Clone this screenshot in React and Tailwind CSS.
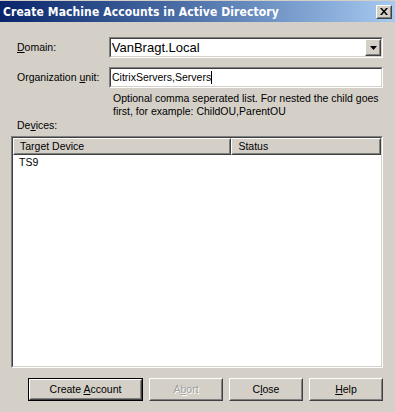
import React from "react";

const font = "font-['Liberation_Sans',Arial,sans-serif]";

// 3D sunken frame used for edit boxes and the list view
function Sunken({ className = "", children }) {
  return (
    <div className={`border border-t-[#808080] border-l-[#808080] border-b-white border-r-white ${className}`}>
      <div className="h-full w-full border border-t-[#404040] border-l-[#404040] border-b-[#d4d0c8] border-r-[#d4d0c8] bg-white">
        {children}
      </div>
    </div>
  );
}

function Raised({ className = "", innerClass = "", children }) {
  return (
    <div className={`border border-t-white border-l-white border-b-[#404040] border-r-[#404040] bg-[#d4d0c8] ${className}`}>
      <div className={`h-full w-full border border-t-[#d4d0c8] border-l-[#d4d0c8] border-b-[#808080] border-r-[#808080] ${innerClass}`}>
        {children}
      </div>
    </div>
  );
}

function Button({ children, isDefault, disabled, width }) {
  const face = (
    <Raised className="h-full w-full" innerClass="flex items-center justify-center">
      <span className={disabled ? "text-[#a0a0a0] [text-shadow:1px_1px_0_#fff]" : "text-black"}>{children}</span>
    </Raised>
  );
  return (
    <div className={`${width} h-[23px] ${isDefault ? "border border-black" : ""}`}>{face}</div>
  );
}

export default function App() {
  return (
    <div className={`w-[395px] h-[412px] bg-[#d4d0c8] flex flex-col text-[10.5px] text-black ${font}`}>
      {/* Title bar */}
      <div className="h-[21px] mt-px flex items-center justify-between pl-[3px] pr-[3px] bg-gradient-to-r from-[#0a246a] to-[#a6caf0]">
        <span className="text-white font-bold text-[12px] font-['DejaVu_Sans_Condensed',sans-serif] tracking-[0.1px]">
          Create Machine Accounts in Active Directory
        </span>
        <Raised className="w-4 h-[14px]" innerClass="flex items-center justify-center">
          <svg width="8" height="7" viewBox="0 0 8 7">
            <path d="M0 0h2l2 2.5L6 0h2L5 3.5 8 7H6L4 4.5 2 7H0l3-3.5z" fill="#000" />
          </svg>
        </Raised>
      </div>

      <div className="flex flex-col pl-[11px] pr-[12px] pt-[15px]">
        {/* Domain */}
        <div className="flex items-center h-[21px]">
          <span className="w-[98px] pl-[6px]"><u>D</u>omain:</span>
          <Sunken className="w-[275px] h-[21px]">
            <div className="flex h-full items-center justify-between">
              <span className="pl-[1px] text-[13px]">VanBragt.Local</span>
              <Raised className="w-4 h-[17px]" innerClass="flex items-center justify-center">
                <svg width="7" height="4" viewBox="0 0 7 4">
                  <path d="M0 0h7L3.5 4z" fill="#000" />
                </svg>
              </Raised>
            </div>
          </Sunken>
        </div>

        {/* Organization unit */}
        <div className="flex items-center h-[21px] mt-[9px]">
          <span className="w-[98px] pl-[6px]">Organization <u>u</u>nit:</span>
          <Sunken className="w-[274px] h-[21px]">
            <div className="flex h-full items-center pl-[1px]">
              <span>CitrixServers,Servers</span>
              <span className="w-px h-[13px] bg-black" />
            </div>
          </Sunken>
        </div>

        <p className="ml-[102px] mt-[4px] leading-[13px] whitespace-nowrap">
          Optional comma seperated list. For nested the child goes
          <br />
          first, for example: ChildOU,ParentOU
        </p>

        <span className="pl-[6px] leading-[13px] mt-[1px]">De<u>v</u>ices:</span>

        {/* Device list */}
        <Sunken className="mt-[4px] w-[372px] h-[232px]">
          <div className="flex h-[17px]">
            <Raised className="w-[219px] h-full" innerClass="flex items-center pl-[5px]">
              Target Device
            </Raised>
            <Raised className="w-[150px] h-full" innerClass="flex items-center pl-[5px]">
              Status
            </Raised>
          </div>
          <div className="pl-[6px] pt-px leading-[13px]">TS9</div>
        </Sunken>

        {/* Buttons */}
        <div className="flex mt-[10px] ml-[17px] gap-[6px]">
          <Button isDefault width="w-[115px]">Create <u>A</u>ccount</Button>
          <Button disabled width="w-[74px]">A<u>b</u>ort</Button>
          <Button width="w-[74px]">C<u>l</u>ose</Button>
          <Button width="w-[74px]"><u>H</u>elp</Button>
        </div>
      </div>
    </div>
  );
}
